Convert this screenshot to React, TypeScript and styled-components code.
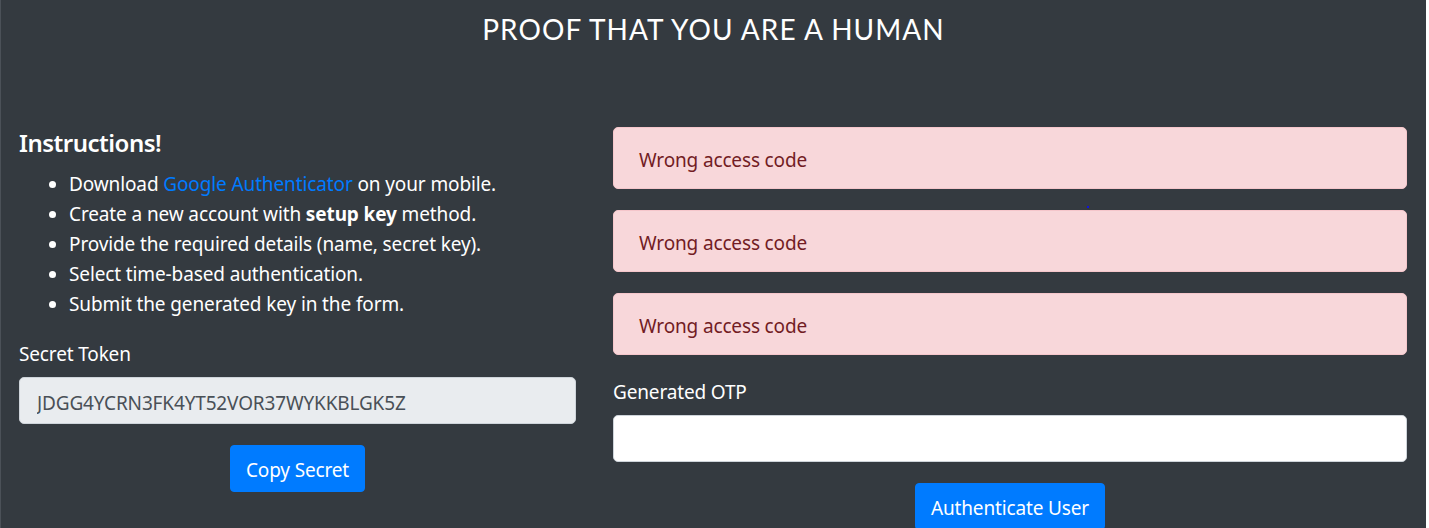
import React from "react";
import styled, { createGlobalStyle } from "styled-components";

const GlobalStyle = createGlobalStyle`
  html, body {
    margin: 0;
    padding: 0;
    background: #ffffff;
    font-family: "Noto Sans", "Open Sans", sans-serif;
  }
  * { box-sizing: border-box; }
`;

const Page = styled.div`
  position: relative;
  width: 1426px;
  height: 528px;
  background: #343a40;
  border-left: 1px solid #4b5158;
  padding: 11px 18px 0 18px;
  color: #ffffff;
  overflow: hidden;
`;

const Title = styled.h1`
  margin: 0;
  text-align: center;
  font-family: "Lato", "Noto Sans", sans-serif;
  font-weight: 400;
  font-size: 28px;
  line-height: 36px;
  letter-spacing: 1.05px;
  color: #ffffff;
`;

const Columns = styled.div`
  display: grid;
  grid-template-columns: 557px 794px;
  column-gap: 37px;
  margin-top: 80px;
`;

const Column = styled.section`
  display: flex;
  flex-direction: column;
  align-items: stretch;
`;

const Heading = styled.h4`
  margin: 0 0 11px 0;
  font-size: 24px;
  font-weight: 600;
  line-height: 31px;
  letter-spacing: -0.5px;
  color: #ffffff;
`;

const List = styled.ul`
  margin: 0 0 19px 0;
  padding-left: 50px;
  list-style: disc;
`;

const Item = styled.li`
  font-size: 19px;
  line-height: 30px;
  letter-spacing: -0.12px;
  color: #ffffff;
`;

const Link = styled.a`
  color: #007bff;
  text-decoration: none;
`;

const Label = styled.label`
  display: block;
  font-size: 19px;
  line-height: 30px;
  letter-spacing: -0.15px;
  padding-top: 1px;
  height: 30px;
  margin-bottom: 9px;
  color: #ffffff;
`;

const Input = styled.input<{ $readOnly?: boolean }>`
  display: block;
  width: 100%;
  height: 47px;
  padding: 9px 17px 5px 17px;
  font-family: "Noto Sans", "Open Sans", sans-serif;
  font-size: 19px;
  letter-spacing: -0.15px;
  color: #495057;
  background: ${(p) => (p.$readOnly ? "#e9ecef" : "#ffffff")};
  border: 1px solid #ced4da;
  border-radius: 5px;
  outline: none;
  margin: 0 0 21px 0;
`;

const ButtonRow = styled.div`
  display: flex;
  justify-content: center;
`;

const Button = styled.button`
  height: 47px;
  padding: 2px 15px 0 15px;
  font-family: "Noto Sans", "Open Sans", sans-serif;
  font-size: 19px;
  letter-spacing: -0.15px;
  color: #ffffff;
  background: #007bff;
  border: 1px solid #007bff;
  border-radius: 4px;
  cursor: pointer;
`;

const Alert = styled.div`
  height: 62px;
  padding: 17px 25px 13px 25px;
  margin-bottom: 21px;
  font-size: 19px;
  line-height: 30px;
  letter-spacing: -0.15px;
  color: #721c24;
  background: #f8d7da;
  border: 1px solid #f5c6cb;
  border-radius: 5px;
`;

const Dot = styled.span`
  position: absolute;
  left: 1086px;
  top: 206px;
  width: 2px;
  height: 2px;
  background: #1010e0;
`;

const steps: React.ReactNode[] = [
  <>
    Download <Link href="#">Google Authenticator</Link> on your mobile.
  </>,
  <>
    Create a new account with <b>setup key</b> method.
  </>,
  <>Provide the required details (name, secret key).</>,
  <>Select time-based authentication.</>,
  <>Submit the generated key in the form.</>,
];

export default function App() {
  return (
    <>
      <GlobalStyle />
      <Page>
        <Title>PROOF THAT YOU ARE A HUMAN</Title>
        <Columns>
          <Column>
            <Heading>Instructions!</Heading>
            <List>
              {steps.map((s, i) => (
                <Item key={i}>{s}</Item>
              ))}
            </List>
            <Label>Secret Token</Label>
            <Input $readOnly readOnly value="JDGG4YCRN3FK4YT52VOR37WYKKBLGK5Z" />
            <ButtonRow>
              <Button>Copy Secret</Button>
            </ButtonRow>
          </Column>
          <Column>
            <Alert>Wrong access code</Alert>
            <Alert>Wrong access code</Alert>
            <Alert>Wrong access code</Alert>
            <Label>Generated OTP</Label>
            <Input />
            <ButtonRow>
              <Button>Authenticate User</Button>
            </ButtonRow>
          </Column>
        </Columns>
        <Dot />
      </Page>
    </>
  );
}
